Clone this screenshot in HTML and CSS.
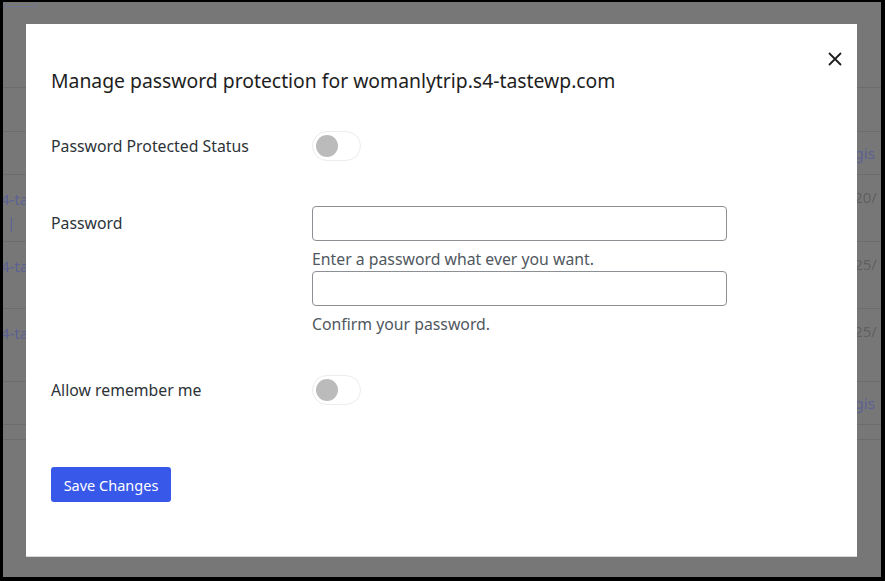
FILE: index.html
```html
<!DOCTYPE html>
<html lang="en">
<head>
<meta charset="utf-8">
<title>Manage password protection</title>
<link rel="stylesheet" href="styles.css">
</head>
<body>
<div class="screen">
  <div class="page" aria-hidden="true">
    <div class="page-top"><span class="page-btn"></span></div>
    <div class="prow gap"></div>
    <div class="prow head"><span class="pl"></span><span class="pr link">Regis</span></div>
    <div class="prow item r1"><span class="pl link">s4-ta<br>d |</span><span class="pr date">2020/</span></div>
    <div class="prow item r2"><span class="pl link">s4-ta</span><span class="pr date">2025/</span></div>
    <div class="prow item r3"><span class="pl link">s4-ta</span><span class="pr date">2025/</span></div>
    <div class="prow head"><span class="pl"></span><span class="pr link">Regis</span></div>
    <div class="prow thin"></div>
  </div>

  <div class="modal" role="dialog" aria-labelledby="mtitle">
    <button class="close" aria-label="Close">
      <svg width="14" height="14" viewBox="0 0 14 14"><path d="M1.5 1.5 L12.5 12.5 M12.5 1.5 L1.5 12.5" stroke="#1e1e1e" stroke-width="1.8" stroke-linecap="round"/></svg>
    </button>
    <h1 id="mtitle" class="title">Manage password protection for womanlytrip.s4-tastewp.com</h1>

    <div class="row row-status">
      <div class="label">Password Protected Status</div>
      <div class="field"><span class="toggle"><span class="knob"></span></span></div>
    </div>

    <div class="row row-pass">
      <div class="label label-top">Password</div>
      <div class="field col">
        <input class="input" type="password">
        <div class="help">Enter a password what ever you want.</div>
        <input class="input" type="password">
        <div class="help help-last">Confirm your password.</div>
      </div>
    </div>

    <div class="row row-remember">
      <div class="label">Allow remember me</div>
      <div class="field"><span class="toggle"><span class="knob"></span></span></div>
    </div>

    <div class="actions">
      <button class="save">Save Changes</button>
    </div>
  </div>
</div>
</body>
</html>
```
FILE: styles.css
```css
html {
  background: #000;
}
body {
  margin: 0;
  font-family: "Noto Sans", "Open Sans", sans-serif;
}
.screen {
  position: relative;
  margin: 2px 0 0 3px;
  width: 878px;
  height: 575px;
  background: #777777;
  overflow: hidden;
}

/* blurred page behind the overlay */
.page {
  filter: blur(0.7px);
  font-size: 15px;
}
.page-top {
  height: 85px;
  border-bottom: 1px solid #6c6c6c;
}
.page-btn {
  display: block;
  width: 32px;
  height: 4px;
  border: 1px solid #6f7592;
  border-top: none;
  border-radius: 0 0 3px 3px;
}
.prow {
  display: flex;
  justify-content: space-between;
  border-bottom: 1px solid #6c6c6c;
}
.prow.gap { height: 43px; }
.prow.head { height: 42px; align-items: center; }
.prow.item { align-items: flex-start; }
.prow.r1 { height: 66px; }
.prow.r2 { height: 66px; }
.prow.r3 { height: 72px; }
.prow.thin { height: 14px; }
.pl {
  margin-left: -9px;
  line-height: 23px;
  width: 44px;
}
.pr {
  width: 44px;
  margin-right: 0;
}
.r1 .pl { padding-top: 13px; }
.r1 .pr { padding-top: 11px; line-height: 22px; }
.r2 .pl, .r3 .pl { padding-top: 13px; }
.r2 .pr, .r3 .pr { padding-top: 11px; line-height: 22px; }
.link { color: #5b6194; }
.date { color: #606060; }

/* modal */
.modal {
  position: absolute;
  left: 23px;
  top: 22px;
  width: 831px;
  height: 532px;
  background: #fff;
  box-sizing: border-box;
  padding: 0 0 0 25px;
  color: #2c3338;
  box-shadow: 0 1px 0 #d8d8d8;
}
.close {
  position: absolute;
  right: 12px;
  top: 25px;
  width: 20px;
  height: 20px;
  padding: 0;
  border: 0;
  background: none;
  display: flex;
  align-items: center;
  justify-content: center;
}
.title {
  margin: 43px 0 0;
  font-size: 19.35px;
  font-weight: 400;
  line-height: 28px;
  color: #1e1e1e;
}
.row {
  display: grid;
  grid-template-columns: 261px 415px;
  align-items: center;
}
.label {
  font-size: 15.8px;
  color: #2c3338;
}
.label-top { align-self: start; padding-top: 6px; }
.row-status { margin-top: 36px; }
.row-pass { margin-top: 45px; }
.row-remember { margin-top: 41px; }
.field { display: flex; }
.col { flex-direction: column; }
.toggle {
  display: block;
  box-sizing: border-box;
  width: 49px;
  height: 30px;
  border: 1px solid #ececec;
  border-radius: 15px;
  background: #fff;
  padding: 3px;
}
.knob {
  display: block;
  width: 22px;
  height: 22px;
  border-radius: 50%;
  background: #bbbbbb;
}
.input {
  box-sizing: border-box;
  width: 415px;
  height: 35px;
  margin: 0;
  border: 1px solid #8c8f94;
  border-radius: 4px;
  background: #fff;
}
.help {
  font-size: 15.8px;
  line-height: 20px;
  color: #50575e;
  margin: 8px 0 2px;
}
.help-last { margin-bottom: 0; }
.actions {
  margin-top: 62px;
}
.save {
  width: 120px;
  height: 35px;
  border: 0;
  border-radius: 3px;
  background: #3858e9;
  color: #fff;
  font-family: inherit;
  font-size: 14.5px;
  padding: 0;
}
```
